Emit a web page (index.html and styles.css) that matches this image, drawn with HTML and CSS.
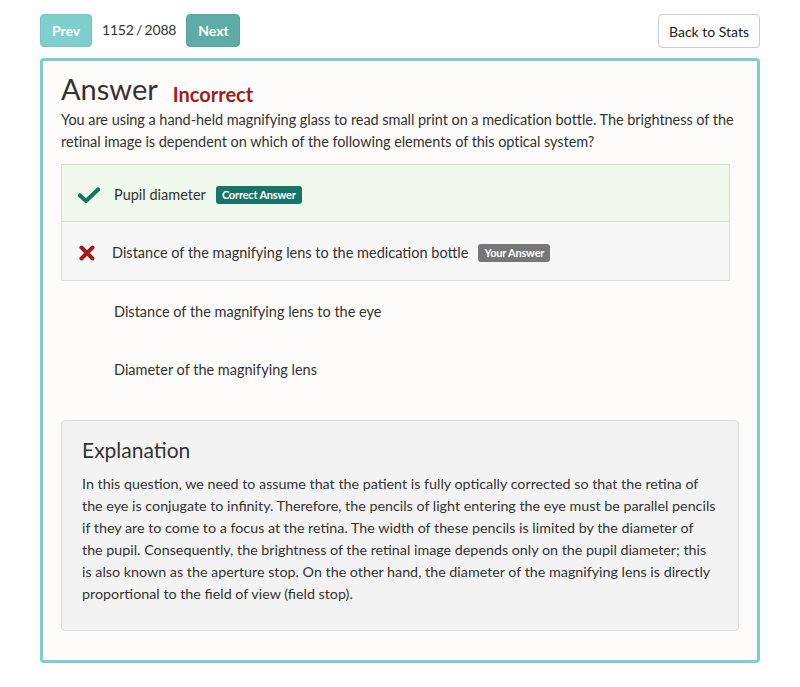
FILE: index.html
```html
<!DOCTYPE html>
<html>
<head>
<meta charset="utf-8">
<link rel="stylesheet" href="styles.css">
</head>
<body>
<div class="page">
  <div class="toolbar">
    <div class="nav">
      <button class="btn btn-prev">Prev</button>
      <span class="counter">1152 / 2088</span>
      <button class="btn btn-next">Next</button>
    </div>
    <button class="btn btn-back">Back to Stats</button>
  </div>
  <div class="panel">
    <div class="title-row">
      <h1 class="title">Answer</h1>
      <span class="status">Incorrect</span>
    </div>
    <p class="question">You are using a hand-held magnifying glass to read small print on a medication bottle. The brightness of the retinal image is dependent on which of the following elements of this optical system?</p>
    <ul class="options">
      <li class="option correct">
        <span class="icon"><svg width="22" height="16" viewBox="0 0 22 16"><path d="M2 8.5 L8 14 L20 2.5" fill="none" stroke="#177565" stroke-width="4.2" stroke-linecap="round" stroke-linejoin="round"/></svg></span>
        <span class="opt-text">Pupil diameter</span>
        <span class="badge badge-correct">Correct Answer</span>
      </li>
      <li class="option wrong">
        <span class="icon"><svg width="16" height="16" viewBox="0 0 16 16"><path d="M2.5 2.5 L13.5 13.5 M13.5 2.5 L2.5 13.5" fill="none" stroke="#a11c1c" stroke-width="4" stroke-linecap="round"/></svg></span>
        <span class="opt-text">Distance of the magnifying lens to the medication bottle</span>
        <span class="badge badge-yours">Your Answer</span>
      </li>
      <li class="option">
        <span class="icon"></span>
        <span class="opt-text">Distance of the magnifying lens to the eye</span>
      </li>
      <li class="option">
        <span class="icon"></span>
        <span class="opt-text">Diameter of the magnifying lens</span>
      </li>
    </ul>
    <div class="explanation">
      <h2 class="exp-title">Explanation</h2>
      <p class="exp-text">In this question, we need to assume that the patient is fully optically corrected so that the retina of<br>the eye is conjugate to infinity. Therefore, the pencils of light entering the eye must be parallel pencils<br>if they are to come to a focus at the retina. The width of these pencils is limited by the diameter of<br>the pupil. Consequently, the brightness of the retinal image depends only on the pupil diameter; this<br>is also known as the aperture stop. On the other hand, the diameter of the magnifying lens is directly<br>proportional to the field of view (field stop).</p>
    </div>
  </div>
</div>
</body>
</html>
```
FILE: styles.css
```css
* { box-sizing: border-box; }
html, body { margin: 0; padding: 0; background: #fff; }
body {
  font-family: Lato, "Open Sans", sans-serif;
  color: #333;
  font-size: 14.5px;
}
.page {
  width: 720px;
  margin: 0 auto;
  padding-top: 14px;
}
.toolbar {
  display: flex;
  justify-content: space-between;
  align-items: flex-start;
}
.nav {
  display: flex;
  align-items: center;
  gap: 10px;
}
.btn {
  font-family: Lato, sans-serif;
  border-radius: 4px;
  height: 33px;
  padding: 0 11px;
  font-size: 14px;
  cursor: pointer;
}
.btn-prev {
  background: #7fd0cc;
  border: 1px solid #74c4c0;
  color: #fff;
  font-weight: 700;
  width: 52px;
}
.btn-next {
  background: #5eaca8;
  border: 1px solid #58a39f;
  color: #fff;
  font-weight: 700;
  width: 54px;
}
.counter {
  font-size: 14px;
  color: #333;
  margin-top: -2px;
  letter-spacing: -0.2px;
  word-spacing: -1px;
}
.btn-back {
  background: #fff;
  border: 1px solid #ccc;
  color: #222;
  height: 34px;
  width: 102px;
  padding: 0;
  font-size: 14px;
}
.panel {
  margin-top: 10px;
  border: 3px solid #7ecfcc;
  border-radius: 4px;
  background: #fdfcfb;
  padding: 8px 18px 29px 18px;
}
.title-row {
  display: flex;
  align-items: baseline;
  gap: 15px;
}
.title {
  margin: 0;
  font-size: 29px;
  font-weight: 400;
  color: #333;
  line-height: 40px;
}
.status {
  font-size: 20px;
  font-weight: 700;
  color: #a11c1c;
  position: relative;
  top: 2px;
}
.question {
  margin: 0;
  line-height: 22px;
  letter-spacing: -0.05px;
}
.options {
  list-style: none;
  margin: 11px 9px 0 0;
  padding: 0;
}
.option {
  display: flex;
  align-items: center;
  height: 58px;
  padding-left: 16px;
  padding-top: 3px;
  border: 1px solid transparent;
}
.option.correct {
  background: #f1f8ee;
  border-color: #c8e6c0;
}
.option.wrong {
  background: #f7f7f7;
  border-color: #dcdcdc;
  border-top: none;
  height: 59px;
}
.icon {
  width: 36px;
  display: flex;
  align-items: center;
}
.option.wrong .icon { width: 34px; padding-left: 1px; }
.opt-text {
  color: #333;
}
.badge {
  margin-left: 10px;
  color: #fff;
  font-size: 11px;
  font-weight: 700;
  padding: 2px 6px;
  border-radius: 3px;
  line-height: 14px;
  letter-spacing: -0.2px;
}
.badge-correct { background: #177565; }
.badge-yours { background: #777; }
.explanation {
  margin-top: 23px;
  background: #f3f3f3;
  border: 1px solid #dcdcdc;
  border-radius: 4px;
  padding: 14px 20px 25px 20px;
}
.exp-title {
  margin: 0 0 8px 0;
  font-size: 21px;
  font-weight: 400;
  color: #333;
  line-height: 30px;
}
.exp-text {
  margin: 0;
  line-height: 22px;
  font-size: 14.3px;
}
```
